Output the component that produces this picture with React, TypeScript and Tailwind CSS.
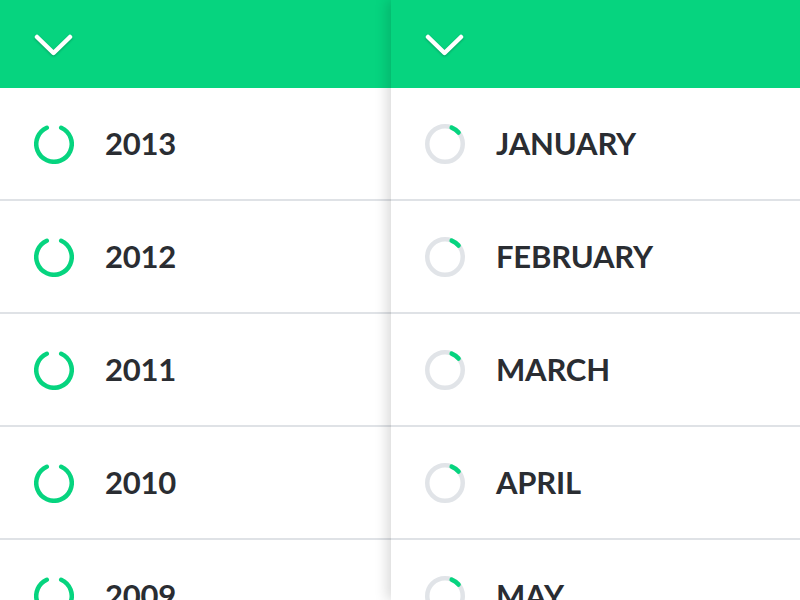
import React from 'react'

const years = ['2013', '2012', '2011', '2010', '2009']
const months = ['JANUARY', 'FEBRUARY', 'MARCH', 'APRIL', 'MAY']

function Chevron() {
  return (
    <svg width="40" height="26" viewBox="0 0 40 26" className="drop-shadow-[0_1px_1px_rgba(0,0,0,0.25)]">
      <polyline
        points="3,3 19.5,19 36,3"
        fill="none"
        stroke="#ffffff"
        strokeWidth="4.5"
        strokeLinecap="round"
        strokeLinejoin="round"
      />
    </svg>
  )
}

function Ring({ full }: { full: boolean }) {
  return (
    <svg width="40" height="40" viewBox="0 0 40 40" className="shrink-0">
      {!full && <circle cx="20" cy="20" r="17.75" fill="none" stroke="#e1e4e8" strokeWidth="4.5" />}
      <circle
        cx="20"
        cy="20"
        r="17.75"
        fill="none"
        stroke="#06d47f"
        strokeWidth="4.5"
        strokeLinecap="round"
        pathLength={360}
        strokeDasharray={full ? '312 360' : '28 360'}
        transform={full ? 'rotate(-66 20 20)' : 'rotate(-68 20 20)'}
      />
    </svg>
  )
}

function Column({ items, full, className }: { items: string[]; full: boolean; className?: string }) {
  return (
    <div className={className}>
      <div className="h-[88px] bg-[#06d47f] flex items-start pt-[34px] pl-[34px]">
        <Chevron />
      </div>
      {items.map(label => (
        <div key={label} className="h-[113px] border-b-2 border-[#dfe2e6] flex items-center pl-[34px] gap-[31px]">
          <Ring full={full} />
          <span className="text-[31px] font-bold text-[#2a2d32] tracking-[-0.2px]">{label}</span>
        </div>
      ))}
    </div>
  )
}

export default function App() {
  return (
    <div className="w-[800px] h-[600px] overflow-hidden flex bg-white font-['Lato',sans-serif]">
      <Column items={years} full className="w-[391px] shrink-0 bg-white" />
      <Column
        items={months}
        full={false}
        className="flex-1 bg-white relative z-10 shadow-[-4px_0_12px_rgba(0,0,0,0.15)]"
      />
    </div>
  )
}
